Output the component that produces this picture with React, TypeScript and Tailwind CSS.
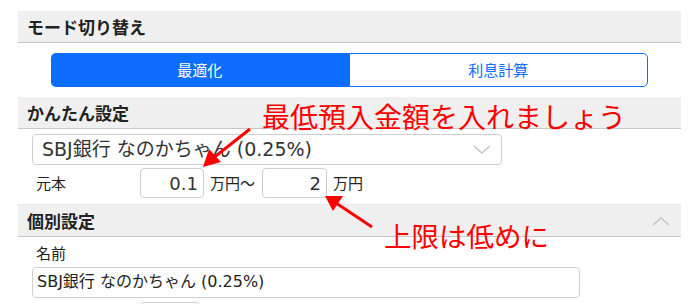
import React from "react";

const jp = { fontFamily: '"Noto Sans CJK JP", "Noto Sans", sans-serif' };
const mix = { fontFamily: '"DejaVu Sans", "Noto Sans CJK JP", sans-serif' };

function Header({ title, chevron }: { title: string; chevron?: boolean }) {
  return (
    <div className="flex h-[32px] items-center justify-between border-b border-[#c8c8c8] bg-[#f0f0f0] pl-[9px] pr-[11px]">
      <span className="text-[17px] font-bold text-[#222]">{title}</span>
      {chevron && (
        <svg width="18" height="10" viewBox="0 0 18 10">
          <path d="M1 9 L9 2 L17 9" fill="none" stroke="#c4c4c4" strokeWidth="1.5" />
        </svg>
      )}
    </div>
  );
}

export default function App() {
  return (
    <div className="relative h-[304px] w-[700px] overflow-hidden bg-white" style={jp}>
      <div className="ml-[18px] w-[663px] pt-[11px]">
        <Header title="モード切り替え" />
        <div className="ml-[33px] mt-[10px] flex h-[34px] w-[597px]">
          <div className="flex flex-1 items-center justify-center rounded-l-[5px] bg-[#0d6efd] text-[15px] text-white">
            最適化
          </div>
          <div className="flex flex-1 items-center justify-center rounded-r-[5px] border border-[#0d6efd] text-[15px] text-[#0d6efd]">
            利息計算
          </div>
        </div>
        <div className="mt-[10px]">
          <Header title="かんたん設定" />
        </div>
        <div className="border-b border-[#e6e6e6] pb-[6px]">
          <div className="ml-[14px] mt-[5px] flex h-[31px] w-[470px] items-center justify-between rounded-[4px] border border-[#cfcfcf] pl-[9px] pr-[10px]">
            <span className="text-[19px] text-[#333]" style={mix}>SBJ銀行 なのかちゃん (0.25%)</span>
            <svg width="18" height="10" viewBox="0 0 18 10">
              <path d="M1 1 L9 8 L17 1" fill="none" stroke="#c4c4c4" strokeWidth="1.5" />
            </svg>
          </div>
          <div className="mt-[3px] flex h-[30px] items-center text-[15px] text-[#222]">
            <span className="ml-[18px] w-[104px]">元本</span>
            <div className="flex h-[30px] w-[64px] items-center justify-end rounded-[4px] border border-[#cfcfcf] pr-[5px] text-[18px] text-[#333]" style={mix}>
              0.1
            </div>
            <span className="ml-[6px] w-[52px]">万円〜</span>
            <div className="flex h-[30px] w-[65px] items-center justify-end rounded-[4px] border border-[#cfcfcf] pr-[5px] text-[18px] text-[#333]" style={mix}>
              2
            </div>
            <span className="ml-[6px]">万円</span>
          </div>
        </div>
        <Header title="個別設定" chevron />
        <div className="ml-[18px] mt-[5px] text-[15px] text-[#222]">名前</div>
        <div className="ml-[14px] mt-[2px] flex h-[31px] w-[548px] items-center rounded-[4px] border border-[#cfcfcf] pl-[4px] text-[16px] text-[#222]" style={mix}>
          SBJ銀行 なのかちゃん (0.25%)
        </div>
        <div className="ml-[122px] mt-[4px] h-[30px] w-[60px] rounded-[4px] border border-[#cfcfcf]" />
      </div>

      <div className="absolute left-[262px] top-[99px] text-[28px] leading-[34px] text-[#ff0000]">
        最低預入金額を入れましょう
      </div>
      <div className="absolute left-[384px] top-[218px] text-[27.5px] leading-[34px] text-[#ff0000]">
        上限は低めに
      </div>
      <svg className="absolute left-0 top-0" width="700" height="304" viewBox="0 0 700 304">
        <line x1="250" y1="129" x2="212" y2="159" stroke="#ff0000" strokeWidth="3" />
        <polygon points="203,167 209,149 221,162" fill="#ff0000" />
        <line x1="372" y1="227" x2="336" y2="203" stroke="#ff0000" strokeWidth="3" />
        <polygon points="325,196 343,196 333,211" fill="#ff0000" />
      </svg>
    </div>
  );
}
